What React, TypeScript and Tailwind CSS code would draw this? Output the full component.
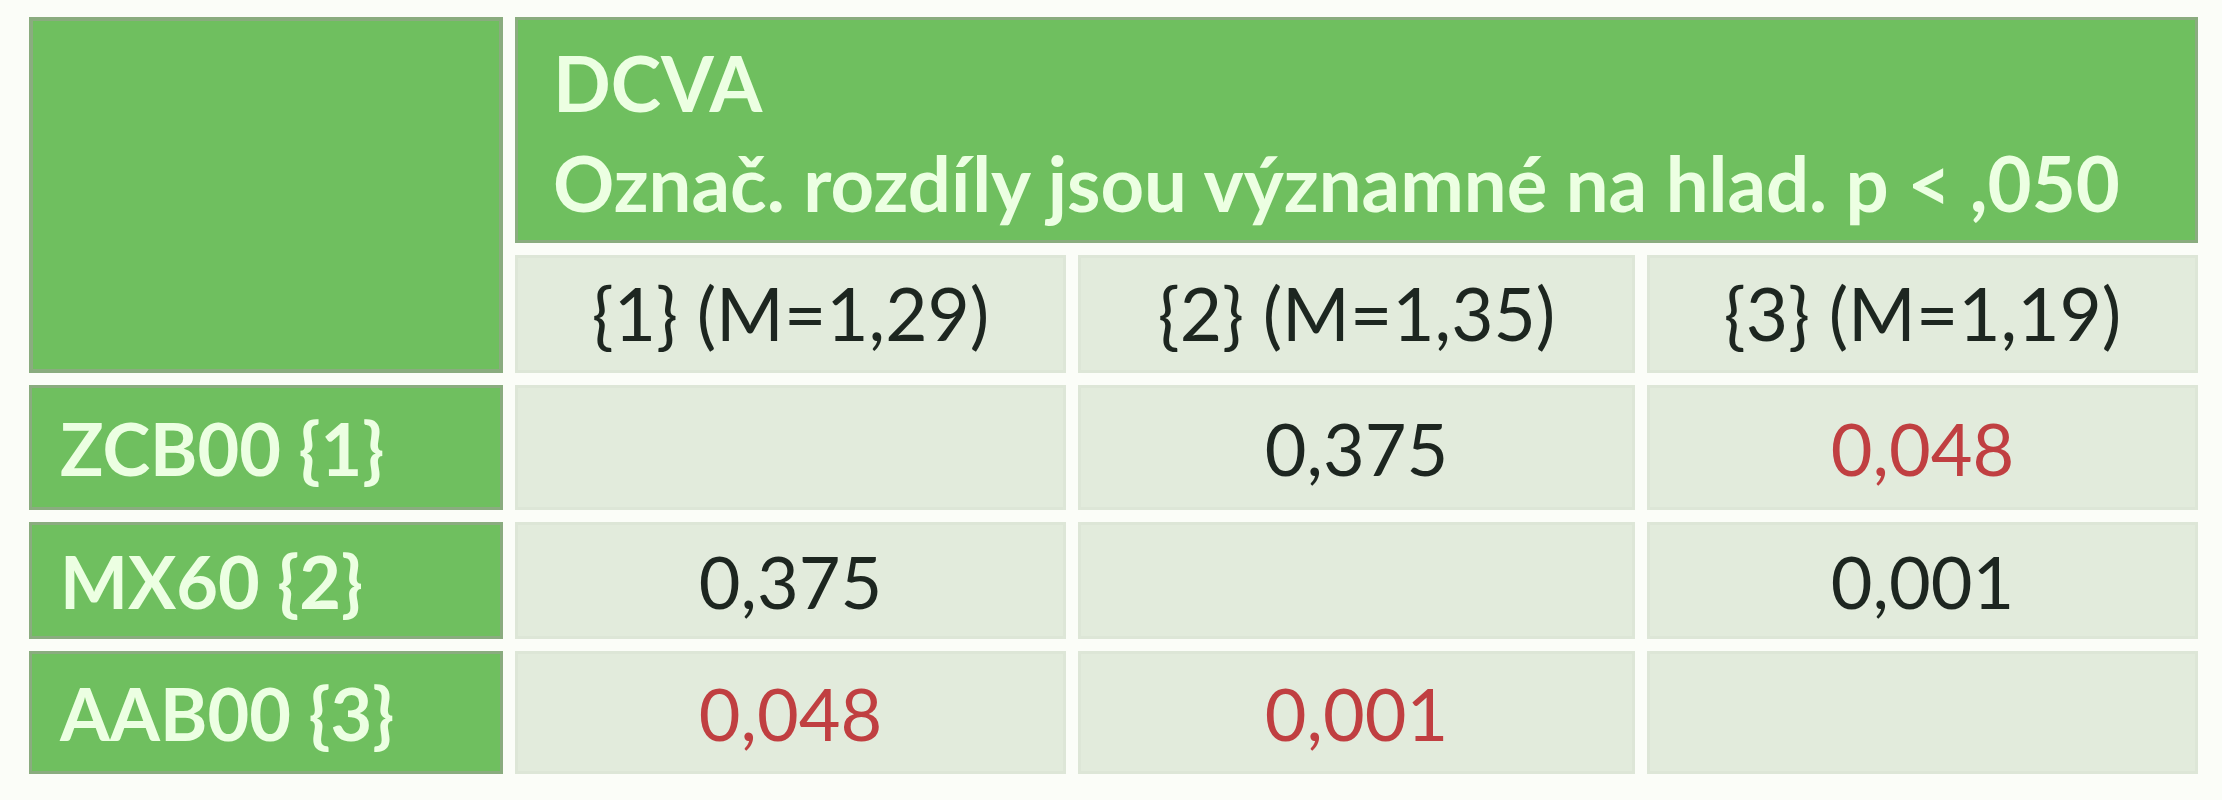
const font = { fontFamily: 'Lato, "Open Sans", "Liberation Sans", sans-serif' };

type Cell = { v: string; red?: boolean };

const rows: { label: string; cells: Cell[] }[] = [
  { label: 'ZCB00 {1}', cells: [{ v: '' }, { v: '0,375' }, { v: '0,048', red: true }] },
  { label: 'MX60 {2}', cells: [{ v: '0,375' }, { v: '' }, { v: '0,001' }] },
  { label: 'AAB00 {3}', cells: [{ v: '0,048', red: true }, { v: '0,001', red: true }, { v: '' }] },
];

const means = ['{1} (M=1,29)', '{2} (M=1,35)', '{3} (M=1,19)'];

export default function App() {
  return (
    <div className="h-[800px] w-[2222px] bg-[#fbfdf8]" style={font}>
      <div className="grid grid-cols-[474px_551px_557px_551px] grid-rows-[226px_118px_125px_117px_123px] gap-x-[12px] gap-y-[12px] pl-[29px] pt-[17px]">
        <div className="row-span-2 border-[4px] border-[#8aac7f] bg-[#6fbf5f]" />

        <div className="col-span-3 border-[3px] border-[#8aac7f] bg-[#6fbf5f] pl-[35px] pt-[13px] text-[76px] font-bold whitespace-nowrap text-[#ecffe2]">
          <div className="leading-[100px]">DCVA</div>
          <div className="leading-[100px]">Označ. rozdíly jsou významné na hlad. p &lt; ,050</div>
        </div>

        {means.map((m) => (
          <div
            key={m}
            className="flex items-center justify-center border-[3px] border-[#dde6d7] bg-[#e2ebdc] text-[73px] text-[#1d2620]"
          >
            {m}
          </div>
        ))}

        {rows.map((r) => (
          <div key={r.label} className="contents">
            <div className="flex items-center border-[3px] border-[#8aac7f] bg-[#6fbf5f] pl-[28px] text-[72px] font-bold whitespace-nowrap text-[#ecffe2]">
              {r.label}
            </div>
            {r.cells.map((c, i) => (
              <div
                key={i}
                className={`flex items-center justify-center border-[3px] border-[#dde6d7] bg-[#e2ebdc] text-[72px] ${
                  c.red ? 'text-[#c03f41]' : 'text-[#1d2620]'
                }`}
              >
                {c.v}
              </div>
            ))}
          </div>
        ))}
      </div>
    </div>
  );
}
